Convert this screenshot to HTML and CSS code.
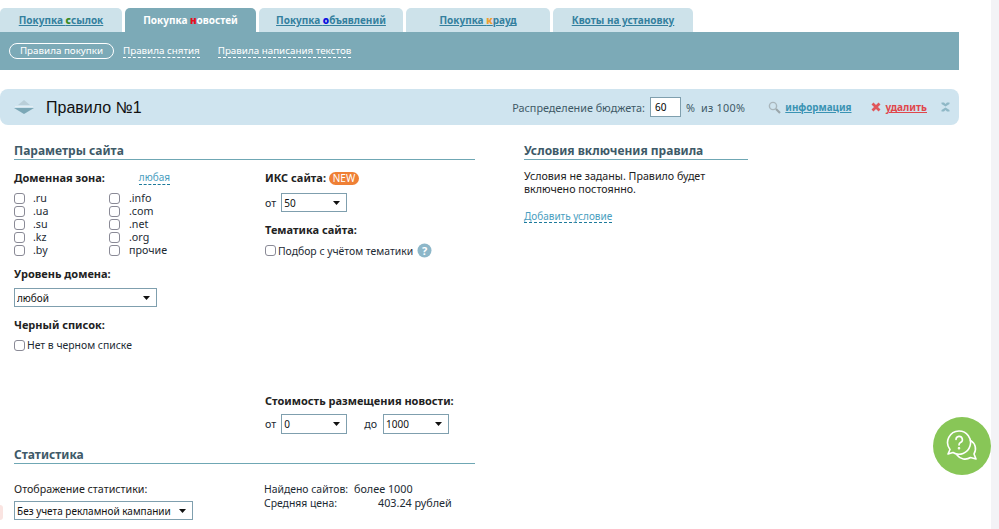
FILE: index.html
```html
<!DOCTYPE html>
<html lang="ru">
<head>
<meta charset="utf-8">
<title>Правило №1</title>
<link rel="stylesheet" href="styles.css">
</head>
<body>
<div class="page">
  <main class="main">
    <nav class="tabs">
      <a class="tab t1"><span>Покупка <b class="g">с</b>сылок</span></a>
      <a class="tab t2 active"><span>Покупка <b class="r">н</b>овостей</span></a>
      <a class="tab t3"><span>Покупка <b class="bl">о</b>бъявлений</span></a>
      <a class="tab t4"><span>Покупка <b class="o">к</b>рауд</span></a>
      <a class="tab t5"><span>Квоты на установку</span></a>
    </nav>
    <div class="subnav">
      <span class="pill">Правила покупки</span>
      <a class="sublink l1">Правила снятия</a>
      <a class="sublink">Правила написания текстов</a>
    </div>
    <header class="rule">
      <svg class="arrows" width="20" height="16" viewBox="0 0 20 16"><path d="M10 1 L16 6 H4 Z" fill="#b9ced8"/><path d="M1 7.5 H19" stroke="#e4eef3" stroke-width="1"/><path d="M0 9 H20 L10 15 Z" fill="#7ba7b6"/></svg>
      <h1 class="rule-title">Правило №1</h1>
      <div class="budget">
        <span>Распределение бюджета:</span>
        <input class="num" type="text" value="60">
        <span class="pct">%</span>
        <span class="total">из 100%</span>
      </div>
      <svg class="ic-search" width="13" height="13" viewBox="0 0 13 13"><circle cx="5" cy="5" r="3.6" fill="none" stroke="#a9b6bc" stroke-width="1.4"/><path d="M8 8 L12 12" stroke="#9aa5aa" stroke-width="2.2"/></svg>
      <a class="info">информация</a>
      <svg class="ic-x" width="10" height="10" viewBox="0 0 10 10"><path d="M1.5 1.5 L8.5 8.5 M8.5 1.5 L1.5 8.5" stroke="#e0565a" stroke-width="2.8"/></svg>
      <a class="del">удалить</a>
      <svg class="ic-more" width="9" height="10" viewBox="0 0 9 10"><path d="M0.5 0.5 L3 0.5 L4.5 2 L6 0.5 L8.5 0.5 L8.5 2 L4.5 4.5 L0.5 2 Z M0.5 8 L4.5 5.5 L8.5 8 L8.5 9.5 L6 9.5 L4.5 8 L3 9.5 L0.5 9.5 Z" fill="#8fb8c6"/></svg>
    </header>
    <div class="content">
      <section class="params">
        <h2 class="head">Параметры сайта</h2>
        <div class="cols">
          <div class="left">
            <div class="zone-head"><b class="lab">Доменная зона:</b><a class="any">любая</a></div>
            <div class="zones">
              <label class="zone"><input class="cb" type="checkbox"><span>.ru</span></label>
              <label class="zone z2"><input class="cb" type="checkbox"><span>.info</span></label>
              <label class="zone"><input class="cb" type="checkbox"><span>.ua</span></label>
              <label class="zone z2"><input class="cb" type="checkbox"><span>.com</span></label>
              <label class="zone"><input class="cb" type="checkbox"><span>.su</span></label>
              <label class="zone z2"><input class="cb" type="checkbox"><span>.net</span></label>
              <label class="zone"><input class="cb" type="checkbox"><span>.kz</span></label>
              <label class="zone z2"><input class="cb" type="checkbox"><span>.org</span></label>
              <label class="zone"><input class="cb" type="checkbox"><span>.by</span></label>
              <label class="zone z2"><input class="cb" type="checkbox"><span>прочие</span></label>
            </div>
            <b class="lab lvl">Уровень домена:</b>
            <select class="sel s-level"><option>любой</option></select>
            <b class="lab black">Черный список:</b>
            <label class="check c-black"><input class="cb" type="checkbox"><span>Нет в черном списке</span></label>
          </div>
          <div class="right">
            <div class="iks"><b class="lab">ИКС сайта:</b><span class="new">NEW</span></div>
            <div class="row r-iks"><span>от</span><select class="sel s-small"><option>50</option></select></div>
            <b class="lab theme">Тематика сайта:</b>
            <label class="check c-theme"><input class="cb" type="checkbox"><span>Подбор с учётом тематики</span>
              <svg class="help" width="15" height="15" viewBox="0 0 15 15"><circle cx="7.5" cy="7.5" r="7" fill="#8db7c9"/><text x="7.5" y="11.5" text-anchor="middle" class="help-q">?</text></svg>
            </label>
            <b class="lab cost">Стоимость размещения новости:</b>
            <div class="row r-cost"><span>от</span><select class="sel s-small"><option>0</option></select><span class="to">до</span><select class="sel s-small"><option>1000</option></select></div>
          </div>
        </div>
        <h2 class="head stat-head">Статистика</h2>
        <div class="cols stat">
          <div class="left">
            <div class="stat-lab">Отображение статистики:</div>
            <select class="sel s-stat"><option>Без учета рекламной кампании</option></select>
          </div>
          <dl class="right facts">
            <dt>Найдено сайтов:</dt><dd>более 1000</dd>
            <dt>Средняя цена:</dt><dd class="price">403.24 рублей</dd>
          </dl>
        </div>
      </section>
      <aside class="conds">
        <h2 class="head">Условия включения правила</h2>
        <p class="cond-text">Условия не заданы. Правило будет включено постоянно.</p>
        <a class="add">Добавить условие</a>
      </aside>
    </div>
  </main>
  <div class="scroll"></div>
</div>
<div class="peek"></div>
<div class="chat">
  <svg width="34" height="34" viewBox="0 0 34 34" fill="none" stroke="#fff" stroke-width="1.6" stroke-linejoin="round" stroke-linecap="round">
    <path d="M14 2 A11.5 11.5 0 0 1 25 17 A11.5 11.5 0 0 1 8 23.5 L3 25 L5 20.5 A11.5 11.5 0 0 1 14 2 Z"/>
    <path d="M25.5 11.5 A9.5 9.5 0 0 1 29 25 L31 30 L25.5 28.5 A10 10 0 0 1 12 26"/>
    <path d="M11 10.5 A3.2 3.2 0 1 1 15.5 13.5 Q14 14.3 14 16"/>
    <circle cx="14" cy="19.3" r="0.5"/>
  </svg>
</div>
</body>
</html>
```
FILE: styles.css
```css
* { box-sizing: border-box; }
html, body { margin: 0; padding: 0; height: 100%; overflow: hidden; background: #fff; }
body { font: 10.7px "Noto Sans", Tahoma, sans-serif; color: #1c2a33; }
.page { display: flex; height: 529px; overflow: hidden; }
.main { width: 991px; padding-top: 8px; }
.scroll { width: 8px; background: #f3f3f6; }

.tabs { display: flex; gap: 3px; height: 24px; }
.tab { display: flex; align-items: center; justify-content: center; height: 24px; background: #cde2ea; border-radius: 5px 5px 0 0; font-weight: bold; font-size: 10px; color: #34809e; text-decoration: underline; }
.t1 { width: 122px; }
.t2 { width: 131px; }
.t3 { width: 144px; }
.t4 { width: 144px; }
.t5 { width: 140px; }
.tab.active { background: #7caab7; color: #fff; text-decoration: none; }
.g { color: #3a8a1e; }
.r { color: #e8101c; }
.bl { color: #0b10e0; }
.o { color: #f0a030; }

.subnav { width: 959px; height: 38px; background: #7caab7; display: flex; align-items: center; padding-left: 9px; color: #fff; font-size: 9.8px; }
.pill { width: 105px; height: 16px; line-height: 13px; border: 1px solid #fff; border-radius: 8px; text-align: center; }
.sublink { border-bottom: 1px dashed #fff; line-height: 12px; margin-left: 18px; }
.sublink.l1 { margin-left: 9px; }

.rule { width: 959px; height: 36px; margin-top: 19px; background: #cfe4ef; border-radius: 8px; display: flex; align-items: center; padding-left: 14px; }
.arrows { flex: none; }
.rule-title { margin: 0 0 0 12px; padding-top: 2px; font: 16px "Liberation Sans", Arial, sans-serif; color: #111; flex: 1; }
.budget { display: flex; align-items: center; color: #3e5966; font-size: 10.8px; }
.num { width: 31px; height: 20px; margin: 0 5px 0 5px; border: 1px solid #7f9fae; background: #fff; font: 10px "Noto Sans", sans-serif; padding: 2px 4px; color: #000; }
.pct { margin-right: 6px; }
.total { letter-spacing: 0.3px; }
.ic-search { margin-left: 23px; }
.info { margin-left: 4px; font-weight: bold; font-size: 9.8px; color: #3a93b3; text-decoration: underline; }
.ic-x { margin-left: 19px; }
.del { margin-left: 5px; font-weight: bold; font-size: 10px; color: #e0474c; text-decoration: underline; }
.ic-more { margin: 0 9px 0 14px; }

.content { display: flex; padding: 18px 0 0 14px; }
.params { width: 461px; }
.conds { width: 224px; margin-left: 49px; }
.head { margin: 0; height: 17px; border-bottom: 1px solid #6fa7b4; font: bold 12px/16px "Noto Sans", sans-serif; color: #3e5a68; }
.cols { display: flex; }
.left { width: 251px; display: flex; flex-direction: column; align-items: flex-start; }
.right { display: flex; flex-direction: column; align-items: flex-start; }
.lab { display: block; font-weight: bold; font-size: 11px; line-height: 14px; color: #222; }
.zone-head { display: flex; margin-top: 11px; }
.any { margin-left: 34px; font-size: 10px; color: #4a9ec0; border-bottom: 1px dashed #1d7a9b; line-height: 12px; }
.zones { display: grid; grid-template-columns: 95px 70px; grid-auto-rows: 13px; margin-top: 7px; }
.zone { display: flex; align-items: center; line-height: 13px; }
.zone .cb { margin-right: 8px; }
.zone.z2 .cb { margin-right: 9px; }
.cb { appearance: none; -webkit-appearance: none; flex: none; width: 11px; height: 11px; margin: 0; border: 1px solid #8a8a96; border-radius: 3px; background: #fff; }
.lvl { margin-top: 10px; }
.sel { appearance: none; -webkit-appearance: none; display: block; height: 19px; border: 1px solid #7f9fae; border-radius: 0; padding: 0 0 0 2px; background: #fff url("data:image/svg+xml,%3Csvg xmlns='http://www.w3.org/2000/svg' width='7' height='4'%3E%3Cpath d='M0 0H7L3.5 4Z' fill='%23111'/%3E%3C/svg%3E") no-repeat right 6px center; font: 10px "Noto Sans", sans-serif; color: #111; }
.s-level { width: 143px; margin-top: 7px; }
.black { margin-top: 11px; }
.check { display: flex; align-items: center; margin-top: 7px; font-size: 10.4px; }
.check .cb { margin-right: 2px; }
.c-black { margin-top: 6px; }
.c-theme { margin-top: 6px; }
.iks { display: flex; align-items: center; margin-top: 11px; }
.new { margin-left: 3px; width: 30px; height: 13px; border-radius: 7px; background: #ef8035; color: #fff; font-size: 10px; line-height: 13px; text-align: center; }
.row { display: flex; align-items: center; }
.r-iks { margin-top: 8px; gap: 5px; }
.s-small { width: 66px; }
.theme { margin-top: 11px; }
.help { margin-left: 4px; }
.help-q { font: bold 11px "Noto Sans", sans-serif; fill: #fff; }
.cost { margin-top: 136px; }
.r-cost { margin-top: 6px; gap: 5px; }
.r-cost .sel { height: 20px; }
.to { margin: 0 1px 0 12px; }
.stat-head { margin-top: 13px; }
.stat { margin-top: 18px; }
.stat-lab { color: #222; line-height: 14px; }
.s-stat { width: 179px; margin-top: 5px; }
.facts { display: grid; grid-template-columns: 90px auto; margin: 0 0 0 -1px; row-gap: 0; line-height: 14px; align-self: flex-start; font-size: 10.4px; }
.facts dt, .facts dd { margin: 0; white-space: nowrap; }
.facts dd { font-size: 10.8px; }
.facts .price { margin-left: 24px; }
.cond-text { margin: 10px 0 0; line-height: 13px; color: #222; }
.add { display: inline-block; margin-top: 14px; font-size: 10px; color: #4a9ec0; border-bottom: 1px dashed #1d7a9b; line-height: 12px; }

.chat { position: fixed; left: 933px; top: 417px; width: 58px; height: 58px; border-radius: 50%; background: #88c657; display: flex; align-items: center; justify-content: center; }
.peek { position: fixed; left: 0; top: 505px; width: 3px; height: 15px; background: #fae4e1; border-radius: 0 3px 3px 0; }
```
